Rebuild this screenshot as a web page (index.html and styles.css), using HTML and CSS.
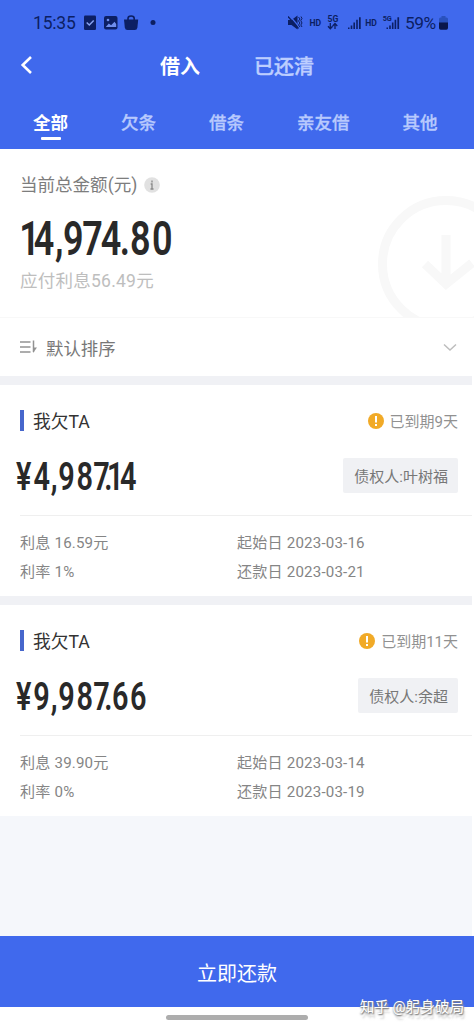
FILE: index.html
```html
<!DOCTYPE html>
<html lang="zh-CN">
<head>
<meta charset="utf-8">
<title>借入</title>
<link rel="stylesheet" href="styles.css">
</head>
<body>
<div class="app">
  <header class="header">
    <div class="status">
      <span class="clock">15:35</span>
      <svg class="status-left" width="75" height="16" viewBox="0 0 75 16">
        <rect x="1" y="0.5" width="12" height="14.5" rx="1.3" fill="#0c1f63"/>
        <path d="M3.7 7.5l2.6 2.5 4.4-4.5" fill="none" stroke="#87a2f0" stroke-width="1.5"/>
        <rect x="21" y="1" width="13.5" height="13.5" rx="2" fill="#0c1f63"/>
        <circle cx="25" cy="5" r="1.3" fill="#6f8eec"/>
        <path d="M22.8 12l3-3.6 2.3 1.8 3.4-3.4 1.7 2.2v3z" fill="#6f8eec"/>
        <path d="M41 4.500h14.200l-.8 8q-.3 2.500-2.700 2.500h-7.200q-2.400 0-2.700-2.500z" fill="#0c1f63"/>
        <path d="M45 6V3.500q0-2.500 3.100-2.500t3.100 2.500V6" fill="none" stroke="#0c1f63" stroke-width="1.600"/>
        <circle cx="70" cy="7.500" r="2.500" fill="#0c1f63"/>
      </svg>
      <span class="spacer"></span>
      <svg class="status-right" width="112" height="18" viewBox="0 0 112 18">
        <g fill="#0c1f63">
          <path d="M0 6h3.500l6-4.500v14l-6-4.500H0z"/>
          <path d="M1.500 1.500l11 13" stroke="#4069ed" stroke-width="1.200"/>
          <path d="M0 2.500l10.500 12" stroke="#0c1f63" stroke-width="1.400"/>
          <path d="M10.500 3l1.500 2-1.500 2 1.500 2-1.500 2 1.500 2M13 2.500l1 2-1.200 2 1.200 2.500-1.200 2 1.200 2" fill="none" stroke="#0c1f63" stroke-width="1"/>
          <text x="21.500" y="11.700" class="net-label">HD</text>
          <text x="39.500" y="8" class="net-label">5G</text>
          <path d="M42.300 9v5.500M40 12.300l2.300 2.500 2.300-2.500M47 15V9.800M44.700 12l2.300-2.500 2.300 2.500" fill="none" stroke="#0c1f63" stroke-width="1.300"/>
          <path d="M60 13.500h1.500v1.500H60zM62.700 11.500h1.600v3.500h-1.600zM65.400 8.500H67V15h-1.600zM68.200 5.800h1.600V15h-1.600zM71 3.200h1.700V15H71z"/>
          <text x="77.200" y="11.700" class="net-label">HD</text>
          <text x="94.700" y="6.700" class="net-label small">5G</text>
          <path d="M98.500 13.500h1.500v1.500h-1.500zM101.200 11.500h1.600v3.500h-1.600zM103.900 8.500h1.600V15h-1.600zM106.600 5.800h1.600V15h-1.600zM109.400 3.200h1.700V15h-1.700z"/>
        </g>
      </svg>
      <span class="percent">59%</span>
      <svg class="battery" width="11" height="16" viewBox="0 0 11 16">
        <path d="M1 4q0-1.500 1.500-1.500h1V1h4v1.500h1Q10 2.500 10 4v4H1z" fill="#2951bd"/>
        <path d="M1 7.500h9V13q0 1.700-1.700 1.700H2.700Q1 14.700 1 13z" fill="#0a174b"/>
      </svg>
    </div>
    <nav class="titlebar">
      <svg class="back" width="14" height="20" viewBox="0 0 14 20"><path d="M11 2L2.700 10l8.300 8" fill="none" stroke="#fff" stroke-width="2.600"/></svg>
      <span class="title current">借入</span>
      <span class="title">已还清</span>
    </nav>
    <div class="tabs">
      <span class="tab current">全部</span>
      <span class="tab">欠条</span>
      <span class="tab">借条</span>
      <span class="tab">亲友借</span>
      <span class="tab">其他</span>
    </div>
  </header>

  <section class="summary">
    <div class="summary-text">
      <div class="total-label">当前总金额(元)
        <svg width="16" height="16" viewBox="0 0 16 16"><circle cx="8" cy="8" r="7.800" fill="#e1e1e1"/><path d="M8 3.500v2M6.700 7H8v4.700M6.500 12h3" fill="none" stroke="#888" stroke-width="1.300"/></svg>
      </div>
      <svg class="total" width="240" height="46" viewBox="0 0 240 46"><text transform="scale(.75 1)" y="39" x="-1 18.500 46.700 57.500 83 107.800 133 146.800 176">14,974.80</text></svg>
      <div class="interest">应付利息56.49元</div>
    </div>
    <svg class="emblem" width="97" height="122" viewBox="0 0 97 122">
      <g fill="none" stroke="#f8f8f8" stroke-width="9"><circle cx="69" cy="69" r="63.500"/><path d="M69 40v49M48 69l21 20 26-21"/></g>
    </svg>
  </section>

  <div class="sort">
    <svg width="18" height="16" viewBox="0 0 18 16"><path d="M0 3h10.500M0 8h10.500M0 13h10.500M13.500 1.500V13" fill="none" stroke="#929292" stroke-width="1.500"/><path d="M13 8.500h4L13 14z" fill="#929292"/></svg>
    <span>默认排序</span>
    <svg class="chevron" width="14" height="9" viewBox="0 0 14 9"><path d="M1 1.500l6 5.500 6-5.500" fill="none" stroke="#bdbdbd" stroke-width="1.500"/></svg>
  </div>

  <main class="list">
    <article class="card">
      <div class="card-head">
        <span class="marker"></span><span class="card-title">我欠TA</span>
        <svg width="16" height="16" viewBox="0 0 16 16"><circle cx="8" cy="8" r="8" fill="#f1aa27"/><path d="M8 3v6.500M8 11v2" stroke="#fff" stroke-width="2"/></svg>
        <span class="due">已到期9天</span>
      </div>
      <div class="card-amount">
        <svg class="amount" width="190" height="40" viewBox="0 0 190 40"><text transform="scale(.75 1)" y="34.500" x="0 23.300 46.300 56.500 80.700 103 117.700 121.500 138.700">¥4,987.14</text></svg>
        <span class="chip">债权人:叶树福</span>
      </div>
      <div class="details">
        <span>利息 16.59元</span><span>起始日 2023-03-16</span>
        <span>利率 1%</span><span>还款日 2023-03-21</span>
      </div>
    </article>
    <article class="card">
      <div class="card-head">
        <span class="marker"></span><span class="card-title">我欠TA</span>
        <svg width="16" height="16" viewBox="0 0 16 16"><circle cx="8" cy="8" r="8" fill="#f1aa27"/><path d="M8 3v6.500M8 11v2" stroke="#fff" stroke-width="2"/></svg>
        <span class="due">已到期11天</span>
      </div>
      <div class="card-amount">
        <svg class="amount" width="190" height="40" viewBox="0 0 190 40"><text transform="scale(.75 1)" y="34.500" x="0 23 46.300 56.500 80.700 103 117.700 128 152">¥9,987.66</text></svg>
        <span class="chip">债权人:余超</span>
      </div>
      <div class="details">
        <span>利息 39.90元</span><span>起始日 2023-03-14</span>
        <span>利率 0%</span><span>还款日 2023-03-19</span>
      </div>
    </article>
  </main>

  <footer class="footer">
    <div class="repay">立即还款</div>
    <div class="gesture"><span class="handle"></span></div>
    <div class="watermark">知乎 @躬身破局</div>
  </footer>
</div>
</body>
</html>
```
FILE: styles.css
```css
* { box-sizing: border-box; }

body {
  margin: 0;
  background: #fff;
  font-family: Roboto, "Noto Sans CJK SC", sans-serif;
}

.app {
  display: flex;
  flex-direction: column;
  width: 474px;
  height: 1027px;
  overflow: hidden;
}

svg { display: block; flex: none; }

.header {
  height: 148.5px;
  flex: none;
  background: #4069ed;
}

.status {
  display: flex;
  align-items: center;
  height: 45px;
  padding: 1px 25px 0 33px;
  color: #0c1f63;
  font-size: 17.5px;
}

.clock { width: 50px; letter-spacing: -0.2px; }
.spacer { flex: 1; }
.percent { margin-left: 5px; width: 33px; font-size: 17.3px; letter-spacing: -0.5px; }
.net-label { font: bold 8.600px Roboto, sans-serif; }
.net-label.small { font-size: 7.300px; }

.titlebar {
  display: flex;
  align-items: center;
  height: 40px;
  padding-left: 20px;
  white-space: nowrap;
}

.back { margin-right: 126px; }

.title {
  color: #bdceff;
  font-size: 20px;
  font-weight: 500;
  -webkit-text-stroke: 0.4px #bdceff;
}

.title.current {
  width: 94px;
  color: #fff;
  font-weight: 700;
  -webkit-text-stroke: 0;
}

.tabs {
  display: flex;
  gap: 53px;
  height: 55px;
  margin-top: 10px;
  padding-left: 33px;
  white-space: nowrap;
}

.tab {
  height: 45px;
  color: #b8c9fd;
  font-size: 17.500px;
  font-weight: 500;
  line-height: 57px;
  -webkit-text-stroke: 0.3px #b8c9fd;
}

.tab.current { color: #fff; font-weight: 700; -webkit-text-stroke: 0; }

.tab.current::after {
  content: "";
  display: block;
  width: 20px;
  height: 3px;
  margin: -15px auto 0;
  border-radius: 1px;
  background: #fff;
}

.summary {
  display: flex;
  justify-content: space-between;
  align-items: flex-end;
  height: 169.500px;
  flex: none;
  padding-left: 20px;
  border-bottom: 1px solid #f8f8f8;
}

.summary-text { align-self: flex-start; padding-top: 22px; }

.total-label {
  display: flex;
  align-items: center;
  gap: 7px;
  height: 25px;
  color: #7d7d7d;
  font-size: 17.550px;
}

.total-label svg { margin-top: 4px; }

.total { margin-top: 20px; overflow: visible; }

.total text {
  fill: #292929;
  font: 600 48px Roboto, sans-serif;
}

.interest {
  height: 26px;
  margin-top: 6px;
  color: #bebebe;
  font-size: 17.500px;
  letter-spacing: 0.25px;
  line-height: 26px;
}

.sort {
  display: flex;
  align-items: center;
  gap: 8px;
  height: 58px;
  flex: none;
  padding: 0 17px 0 20px;
  color: #777;
  font-size: 17.400px;
}

.chevron { margin-left: auto; }

.list {
  flex: 1;
  margin-right: 2px;
  background: #f5f7fb;
}

.card {
  height: 220px;
  border-top: 9px solid #f0f1f5;
  background: #fff;
}

.card-head {
  display: flex;
  align-items: center;
  height: 70px;
  padding: 0 14px 0 20px;
}

.card-head svg { margin-top: 2px; }

.marker { width: 4px; height: 21px; background: #4767cc; }

.card-title {
  flex: 1;
  margin-left: 9px;
  color: #333;
  font-size: 17.700px;
}

.due { margin-left: 6px; color: #919191; font-size: 15px; }

.card-amount {
  display: flex;
  justify-content: space-between;
  align-items: center;
  height: 40px;
  padding: 0 14px 0 16px;
}

.amount { overflow: visible; }

.amount text {
  fill: #292929;
  font: 600 38.500px Roboto, sans-serif;
}

.chip {
  height: 35px;
  padding: 1px 10px 0 11px;
  border-radius: 2px;
  background: #f0f1f4;
  color: #777;
  font-size: 15px;
  line-height: 36px;
}

.details {
  display: grid;
  grid-template-columns: 217px 1fr;
  grid-auto-rows: 29px;
  margin: 20px 0 0 20px;
  padding-top: 13px;
  border-top: 1px solid #efefef;
  color: #858585;
  font-size: 15.100px;
  letter-spacing: 0.18px;
  line-height: 29px;
}

.footer {
  position: relative;
  height: 91px;
  flex: none;
}

.repay {
  height: 71px;
  background: #4069ed;
  color: #fff;
  font-size: 20px;
  line-height: 76px;
  text-align: center;
}

.gesture {
  display: flex;
  justify-content: center;
  padding-top: 8px;
}

.handle { width: 142px; height: 5px; border-radius: 3px; background: #adadad; }

/* Overlay credit across the button's lower edge */
.watermark {
  position: absolute;
  right: 10px;
  bottom: 9px;
  color: #fff;
  font-size: 14.600px;
  line-height: 22px;
  text-shadow: 0 1px 2px #777, 1px 1px 1px #999, 2px 5px 2px #bbbbbb99;
}
```
